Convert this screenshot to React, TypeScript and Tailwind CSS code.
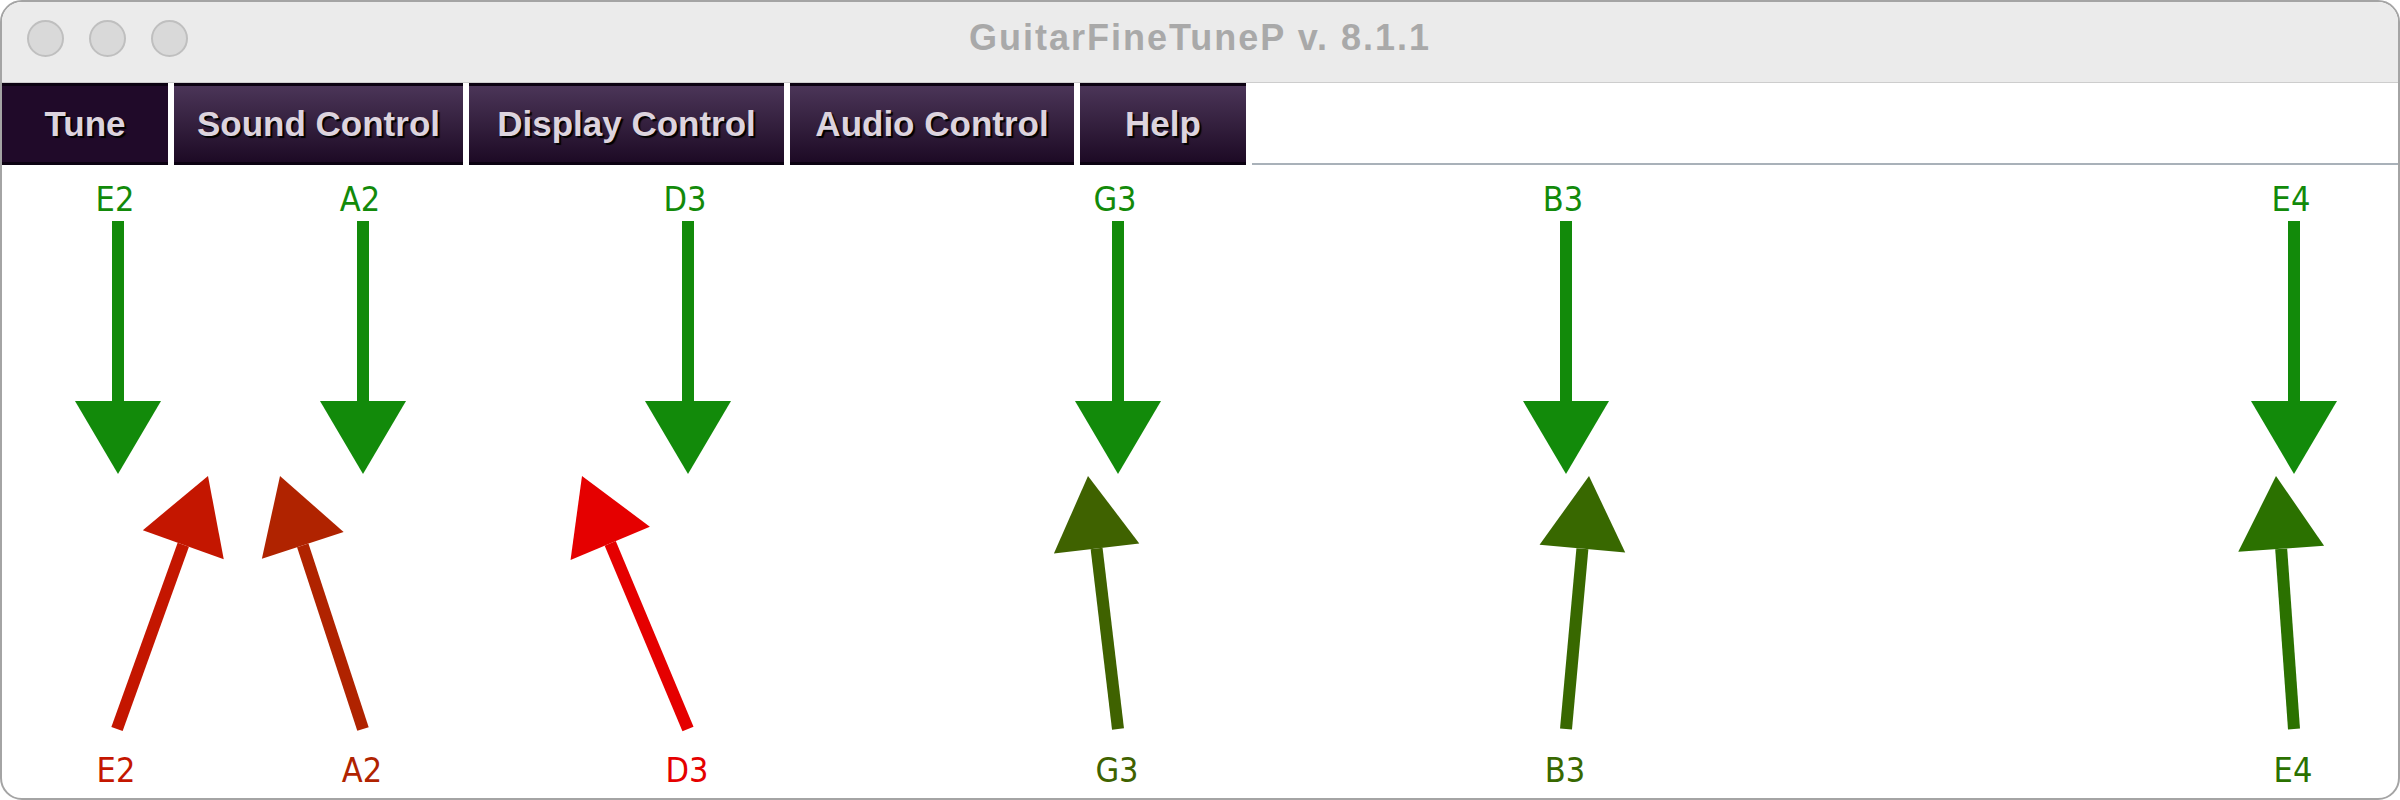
import React from "react";

interface Note {
  name: string;
  x: number; // reference (target) position
  tail: number; // bottom of the measured arrow
  tip: number; // head of the measured arrow
  color: string;
}

const notes: Note[] = [
  { name: "E2", x: 118, tail: 117, tip: 208, color: "#c41600" },
  { name: "A2", x: 363, tail: 363, tip: 280, color: "#b02300" },
  { name: "D3", x: 688, tail: 688, tip: 582, color: "#e50000" },
  { name: "G3", x: 1118, tail: 1118, tip: 1088, color: "#3f6200" },
  { name: "B3", x: 1566, tail: 1566, tip: 1589, color: "#386800" },
  { name: "E4", x: 2294, tail: 2294, tip: 2276, color: "#2b7100" },
];

const tabs = [
  { label: "Tune", width: "w-[166px]", active: true },
  { label: "Sound Control", width: "w-[289px]", active: false },
  { label: "Display Control", width: "w-[315px]", active: false },
  { label: "Audio Control", width: "w-[284px]", active: false },
  { label: "Help", width: "w-[166px]", active: false },
];

const GREEN = "#128a0a";
const HEAD_W = 43;
const HEAD_H = 73;

function UpArrow({ note }: { note: Note }) {
  const y0 = 729;
  const y1 = 476;
  const dx = note.tip - note.tail;
  const dy = y1 - y0;
  const len = Math.sqrt(dx * dx + dy * dy);
  const ux = dx / len;
  const uy = dy / len;
  const bx = note.tip - ux * HEAD_H;
  const by = y1 - uy * HEAD_H;
  const nx = -uy;
  const ny = ux;
  const pts = [
    `${note.tip},${y1}`,
    `${bx + nx * HEAD_W},${by + ny * HEAD_W}`,
    `${bx - nx * HEAD_W},${by - ny * HEAD_W}`,
  ].join(" ");

  return (
    <g fill={note.color} stroke={note.color}>
      <line x1={note.tail} y1={y0} x2={bx} y2={by} strokeWidth={12} />
      <polygon points={pts} stroke="none" />
    </g>
  );
}

function DownArrow({ x }: { x: number }) {
  return (
    <g fill={GREEN}>
      <rect x={x - 6} y={221} width={12} height={182} />
      <polygon points={`${x - HEAD_W},401 ${x + HEAD_W},401 ${x},474`} />
    </g>
  );
}

export default function App() {
  return (
    <div className="w-[2400px] h-[800px] bg-white">
      <div className="h-full flex flex-col rounded-[22px] border-2 border-[#a4a4a4] overflow-hidden bg-white">
        {/* Title bar */}
        <div className="h-[81px] shrink-0 grid grid-cols-[1fr_auto_1fr] items-center bg-[#ebebeb] border-b border-[#cdcdcd]">
          <div className="flex gap-[25px] pl-[25px] pb-[8px]">
            <div className="w-[37px] h-[37px] rounded-full bg-[#d9d9d9] border-2 border-[#bfbfbf]" />
            <div className="w-[37px] h-[37px] rounded-full bg-[#d9d9d9] border-2 border-[#bfbfbf]" />
            <div className="w-[37px] h-[37px] rounded-full bg-[#d9d9d9] border-2 border-[#bfbfbf]" />
          </div>
          <div className="pb-[8px] font-['Liberation_Sans',Arial,sans-serif] font-bold text-[36px] tracking-[2px] text-[#a9a9a9]">
            GuitarFineTuneP v. 8.1.1
          </div>
          <div />
        </div>

        {/* Tab bar */}
        <div className="h-[82px] shrink-0 flex gap-[6px] bg-white font-['Liberation_Sans',Arial,sans-serif]">
          {tabs.map((tab) => (
            <div
              key={tab.label}
              className={`${tab.width} flex items-center justify-center border-y-[3px] border-[#0c0212] ${
                tab.active
                  ? "bg-[#200a29]"
                  : "bg-linear-to-b from-[#4b3558] via-[#34203e] to-[#1d0a25]"
              }`}
            >
              <span className="text-[35px] font-bold text-[#ddd4de] [text-shadow:2px_2px_1px_#000000]">
                {tab.label}
              </span>
            </div>
          ))}
          <div className="flex-1 border-b-2 border-[#a9b1b9]" />
        </div>

        {/* Tuning canvas */}
        <div className="flex-1">
          <svg
            width={2396}
            height={633}
            viewBox="2 165 2396 633"
            className="block font-['DejaVu_Sans_Condensed','Liberation_Sans_Narrow','Liberation_Sans',sans-serif]"
          >
            {notes.map((n) => (
              <g key={n.name}>
                <text x={n.x - 3} y={211} textAnchor="middle" fontSize={34} fill={GREEN}>
                  {n.name}
                </text>
                <DownArrow x={n.x} />
                <UpArrow note={n} />
                <text x={n.tail - 1} y={782} textAnchor="middle" fontSize={34} fill={n.color}>
                  {n.name}
                </text>
              </g>
            ))}
          </svg>
        </div>
      </div>
    </div>
  );
}
